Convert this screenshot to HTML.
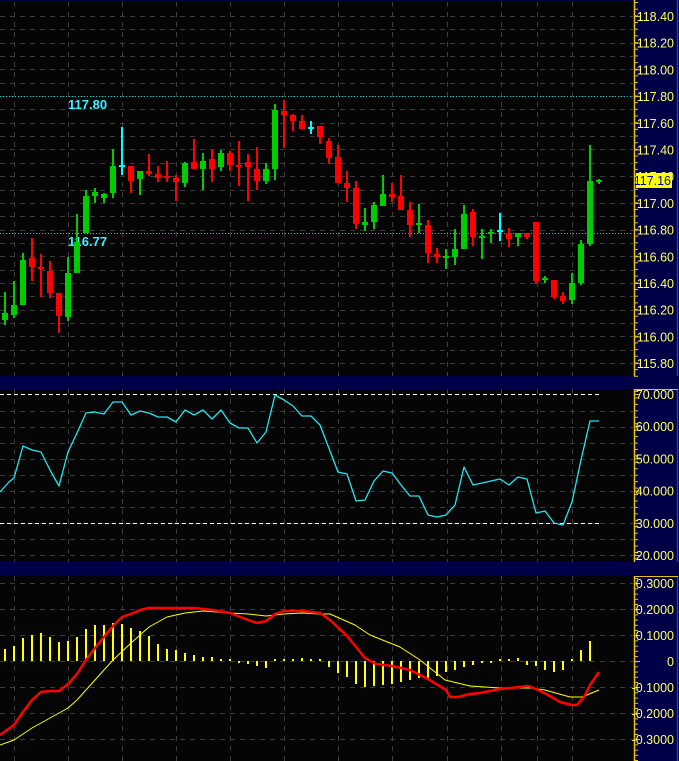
<!DOCTYPE html>
<html><head><meta charset="utf-8"><style>
html,body{margin:0;padding:0;background:#050505;width:679px;height:761px;overflow:hidden}
svg{display:block}
text{font-family:"Liberation Sans",sans-serif}
</style></head><body>
<svg id="s" width="679" height="761" xmlns="http://www.w3.org/2000/svg"></svg>
<script>
var s=document.getElementById('s');var h='';
function R(x,y,w,hh,c){h+='<rect x="'+x+'" y="'+y+'" width="'+w+'" height="'+hh+'" fill="'+c+'"/>';}
function L(x1,y1,x2,y2,c,w,d){h+='<line x1="'+x1+'" y1="'+y1+'" x2="'+x2+'" y2="'+y2+'" stroke="'+c+'" stroke-width="'+(w||1)+'"'+(d?' stroke-dasharray="'+d+'"':'')+'/>';}
function T(x,y,t,c,sz,a,b){h+='<text x="'+x+'" y="'+y+'" fill="'+c+'" font-size="'+sz+'"'+(a?' text-anchor="'+a+'"':'')+(b?' font-weight="bold"':'')+'>'+t+'</text>';}
function P(pts,c,w){h+='<polyline fill="none" stroke="'+c+'" stroke-width="'+w+'" stroke-linejoin="round" points="'+pts.map(function(p){return p.join(',')}).join(' ')+'"/>';}
R(0,0,679,761,'#050505');
R(0,0,679,2,'#000048');
R(0,376,679,13,'#000048');R(0,562,679,14,'#000048');
var vx=[14,68,122,176,230,284,338,392,447,501,537,572];
function grid(y0,y1,ys){vx.forEach(function(x){L(x+.5,y0,x+.5,y1,'#3c3c3c',1,'5,5');});ys.forEach(function(y){L(0,y+.5,633,y+.5,'#3c3c3c',1,'5,5');});}
var ys=[];for(var y=16;y<376;y+=13.35)ys.push(Math.round(y));grid(2,376,ys);
ys=[];for(y=411;y<562;y+=16)ys.push(y);grid(389,562,ys);
grid(576,761,[583,609,635,687,713,739,661]);
L(0,96.5,633,96.5,'#00d0d0',1,'1,2');L(0,233.5,633,233.5,'#00d0d0',1,'1,2');
T(68,109,'117.80','#40f0ff',13,null,true);T(68,246,'116.77','#40f0ff',13,null,true);
var G='#00cc00',Rd='#ff0000',C='#00ffff';
var c=[[G,292,325,313,320],[G,281,318,305,315],[G,253,305,260,305],[Rd,238,281,258,267],[Rd,254,297,267,269],[Rd,261,298,271,293],[Rd,293,333,293,316],[G,257,321,273,317],[G,214,273,242,273],[G,190,233,196,233],[G,188,203,192,196],[G,193,203,194,198],[G,149,198,166,193],[C,127,175,165,167],[Rd,166,193,166,181],[G,171,195,171,179],[Rd,154,176,171,174],[Rd,166,182,174,178],[Rd,161,182,176,178],[Rd,175,201,178,182],[G,162,187,163,183],[Rd,139,169,162,169],[G,153,190,161,169],[Rd,150,182,159,169],[G,150,171,153,167],[Rd,151,171,153,165],[Rd,141,186,165,167],[Rd,154,201,162,167],[Rd,147,190,169,181],[G,163,184,169,181],[G,104,180,110,169],[Rd,100,148,111,115],[Rd,114,131,115,121],[Rd,115,129,121,129],[C,121,134,127,129],[Rd,126,144,126,137],[Rd,138,164,141,158],[Rd,145,183,157,183],[Rd,171,202,183,188],[Rd,181,229,188,224],[G,208,231,222,225],[G,202,229,205,222],[G,175,206,194,206],[Rd,183,202,194,197],[Rd,175,210,196,210],[Rd,202,237,210,225],[G,204,233,223,225],[Rd,220,263,225,253],[Rd,248,263,254,257],[G,249,269,256,258],[G,229,265,249,257],[G,205,249,214,249],[Rd,209,246,212,237],[G,229,259,236,238],[G,229,243,232,234],[C,213,241,230,232],[Rd,228,247,233,239],[G,233,246,233,237],[Rd,233,239,233,237],[Rd,222,284,222,281],[G,276,283,278,280],[Rd,280,299,280,297],[Rd,292,304,296,301],[G,273,304,283,300],[G,240,285,244,283],[G,145,246,181,244],[G,179,184,180,182]];
c.forEach(function(k,i){var x=5+9*i;R(x-1,k[1],2,k[2]-k[1],k[0]);var bh=Math.max(2,k[4]-k[3]);R(x-3,k[3],6,bh,k[0]);});
L(0,394.5,600,394.5,'#fff',1,'4,3');L(0,523.5,600,523.5,'#fff',1,'4,3');
P([[0,492],[9,482],[14,478],[23,446],[32,450],[41,452],[50,470],[59,486],[68,452],[77,433],[86,413],[95,412],[104,414],[113,402],[122,402],[131,415],[140,411],[149,413],[158,417],[167,417],[176,422],[185,410],[194,415],[203,410],[212,419],[221,410],[230,423],[239,428],[248,428],[257,443],[266,432],[275,395],[284,400],[293,406],[302,416],[311,416],[320,425],[330,451],[338,472],[347,474],[356,501],[365,500],[374,481],[383,471],[392,473],[401,485],[410,496],[419,496],[428,515],[437,517],[446,515],[455,505],[464,467],[473,485],[482,483],[491,481],[500,479],[509,485],[518,477],[527,479],[536,513],[545,511],[554,523],[563,525],[572,502],[581,460],[590,421],[599,421]],'#20e8f0',1.3);
var hb=[649,646,638,635,633,637,642,641,637,629,625,625,623,624,628,631,636,644,649,650,653,655,657,657,659,660,662,664,666,668,660,660,659,658,660,661,667,673,677,684,687,686,685,684,682,680,678,678,676,672,670,667,665,662,662,661,659,658,665,666,670,672,670,661,650,641];
hb.forEach(function(v,i){var x=5+9*i;var a=Math.min(v,661),b=Math.max(v,661);if(b-a<2){a=v<=661?659:661;b=a+2;}R(x-1,a,2,b-a,'#ffff00');});
P([[0,745],[14,740],[32,728],[50,718],[68,708],[77,700],[95,680],[113,660],[131,643],[149,627],[167,617],[185,613],[203,611],[230,613],[248,614],[266,616],[284,614],[302,613],[320,614],[330,614],[355,625],[370,635],[400,647],[420,660],[445,680],[470,686],[500,688],[530,688],[545,690],[570,697],[582,697],[599,690]],'#ffff00',1);
P([[0,735],[14,725],[23,712],[32,700],[41,692],[50,691],[59,691],[68,684],[77,674],[86,660],[95,648],[104,637],[113,626],[122,617],[131,614],[140,610],[149,608],[158,608],[176,608],[194,608],[212,610],[230,613],[248,620],[257,623],[266,621],[275,614],[284,611],[302,611],[320,613],[330,620],[347,636],[365,658],[376,664],[392,666],[410,670],[428,679],[446,690],[450,697],[458,697],[470,694],[480,693],[500,689],[520,687],[528,686],[536,689],[548,695],[560,702],[572,705],[577,705],[584,697],[590,685],[599,672]],'#ff0000',2.5);
function axis(y0,y1,step,start){R(634,y0,45,y1-y0,'#000048');L(634.5,y0,634.5,y1,'#e8c020',1.5);L(677.5,y0,677.5,y1,'#2040c0',1.5);if(y0>5)L(634,y0+.5,678,y0+.5,'#e8c020',1);for(var y=start;y<y1;y+=step)L(634,y+.5,638,y+.5,'#e8c020',1);}
axis(0,376,6.675,2);axis(389,562,6.44,391);axis(576,761,5.2,578);
var pl=['118.40','118.20','118.00','117.80','117.60','117.40','117.20','117.00','116.80','116.60','116.40','116.20','116.00','115.80'];
pl.forEach(function(t,i){var y=16+26.7*i;L(634,y+.5,640,y+.5,'#e8c020',1);T(674,y+5,t,'#ffff60',12.5,'end');});
R(636,173,36,15,'#ffff00');T(671,185,'117.16','#0000c0',12.5,'end');
['70.000','60.000','50.000','40.000','30.000','20.000'].forEach(function(t,i){var y=394+32.2*i;L(634,y+.5,640,y+.5,'#e8c020',1);T(674,y+5,t,'#ffff60',12.5,'end');});
['0.3000','0.2000','0.1000','0','-0.1000','-0.2000','-0.3000'].forEach(function(t,i){var y=583+26*i;L(634,y+.5,640,y+.5,'#e8c020',1);T(674,y+5,t,'#ffff60',12.5,'end');});
s.innerHTML=h;
</script>
</body></html>
